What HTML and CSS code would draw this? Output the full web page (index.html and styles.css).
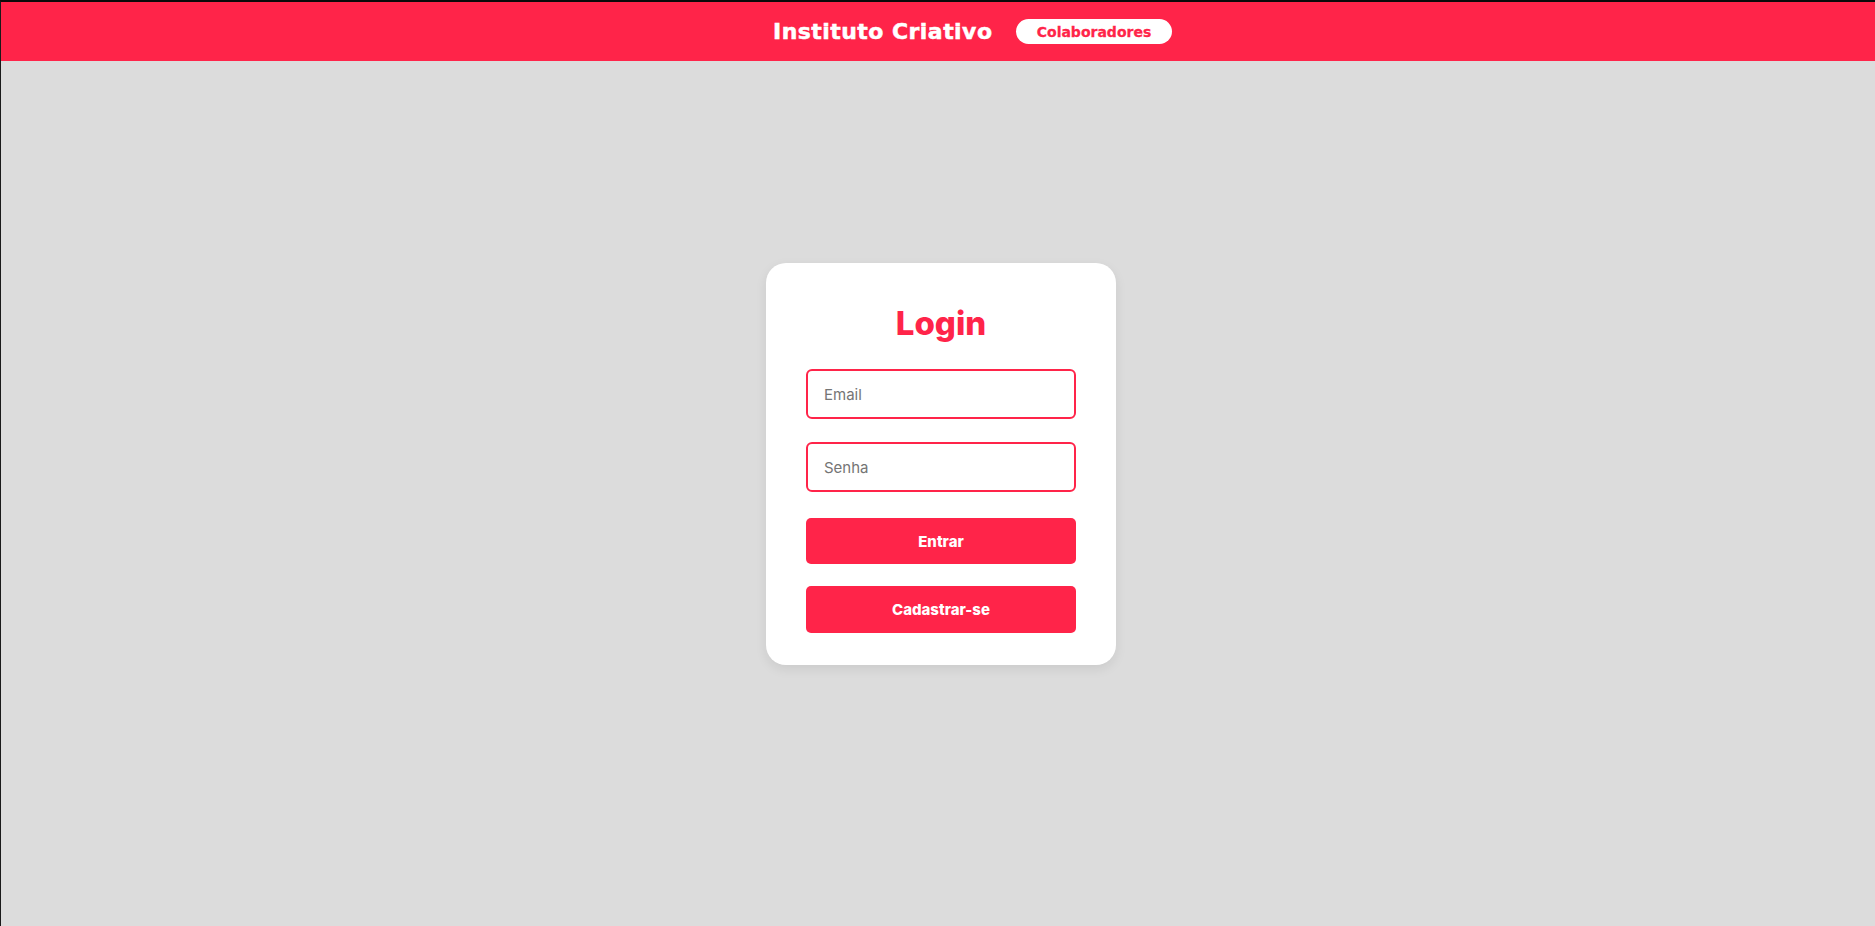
FILE: index.html
```html
<!DOCTYPE html>
<html lang="pt-BR">
<head>
<meta charset="utf-8">
<title>Instituto Criativo - Login</title>
<link rel="stylesheet" href="styles.css">
</head>
<body>
<header class="topbar">
  <h2 class="brand">Instituto Criativo</h2>
  <nav class="nav">
    <a class="pill" href="#">Colaboradores</a>
  </nav>
</header>
<main class="main">
  <form class="card">
    <h1 class="title">Login</h1>
    <input class="field" type="email" placeholder="Email">
    <input class="field field-pass" type="password" placeholder="Senha">
    <button class="btn btn-first" type="button">Entrar</button>
    <button class="btn btn-second" type="button">Cadastrar-se</button>
  </form>
</main>
</body>
</html>
```
FILE: styles.css
```css
* { box-sizing: border-box; }
html, body { margin: 0; padding: 0; }
body {
  background: #dcdcdc;
  border-top: 2px solid #0a0a0a;
  border-left: 1px solid #1a1a1a;
  font-family: Inter, "Open Sans", sans-serif;
  height: 926px;
  overflow: hidden;
}
.topbar {
  height: 59px;
  background: #ff2449;
  display: flex;
  align-items: center;
  justify-content: center;
  padding-left: 69px;
  gap: 24px;
}
.brand {
  margin: 0;
  width: 219px;
  white-space: nowrap;
  color: #fff;
  font-family: "DejaVu Sans", Verdana, sans-serif;
  font-size: 22px;
  font-weight: 700;
  letter-spacing: 0.45px;
  line-height: 1;
  -webkit-text-stroke: 0.5px #fff;
}
.nav { display: flex; }
.pill {
  display: flex;
  align-items: center;
  justify-content: center;
  width: 156px;
  height: 25px;
  border-radius: 13px;
  background: #fff;
  color: #ff2449;
  font-family: "DejaVu Sans", Verdana, sans-serif;
  font-size: 14px;
  font-weight: 700;
  text-decoration: none;
  -webkit-text-stroke: 0.3px #ff2449;
}
.main {
  height: 865px;
  display: flex;
  align-items: center;
  justify-content: center;
  padding-bottom: 59px;
  padding-left: 6px;
}
.card {
  width: 350px;
  height: 402px;
  background: #fff;
  border-radius: 20px;
  box-shadow: 0 4px 12px rgba(0,0,0,0.08);
  padding: 40px 40px 0;
  display: flex;
  flex-direction: column;
}
.title {
  margin: 0 0 26px;
  text-align: center;
  color: #ff2449;
  font-size: 33px;
  font-weight: 800;
  line-height: 40px;
  letter-spacing: 0;
}
.field {
  width: 270px;
  height: 50px;
  border: 2px solid #ff2449;
  border-radius: 6px;
  padding: 0 16px;
  font-family: inherit;
  font-size: 15px;
  color: #333;
  background: #fff;
  outline: none;
}
.field::placeholder { color: #757575; }
.field-pass { margin-top: 23px; }
.btn {
  width: 270px;
  height: 46px;
  border: none;
  border-radius: 5px;
  background: #ff2449;
  color: #fff;
  font-family: inherit;
  font-size: 15px;
  font-weight: 800;
  cursor: pointer;
}
.btn-first { margin-top: 26px; }
.btn-second { margin-top: 22px; height: 47px; }
```
